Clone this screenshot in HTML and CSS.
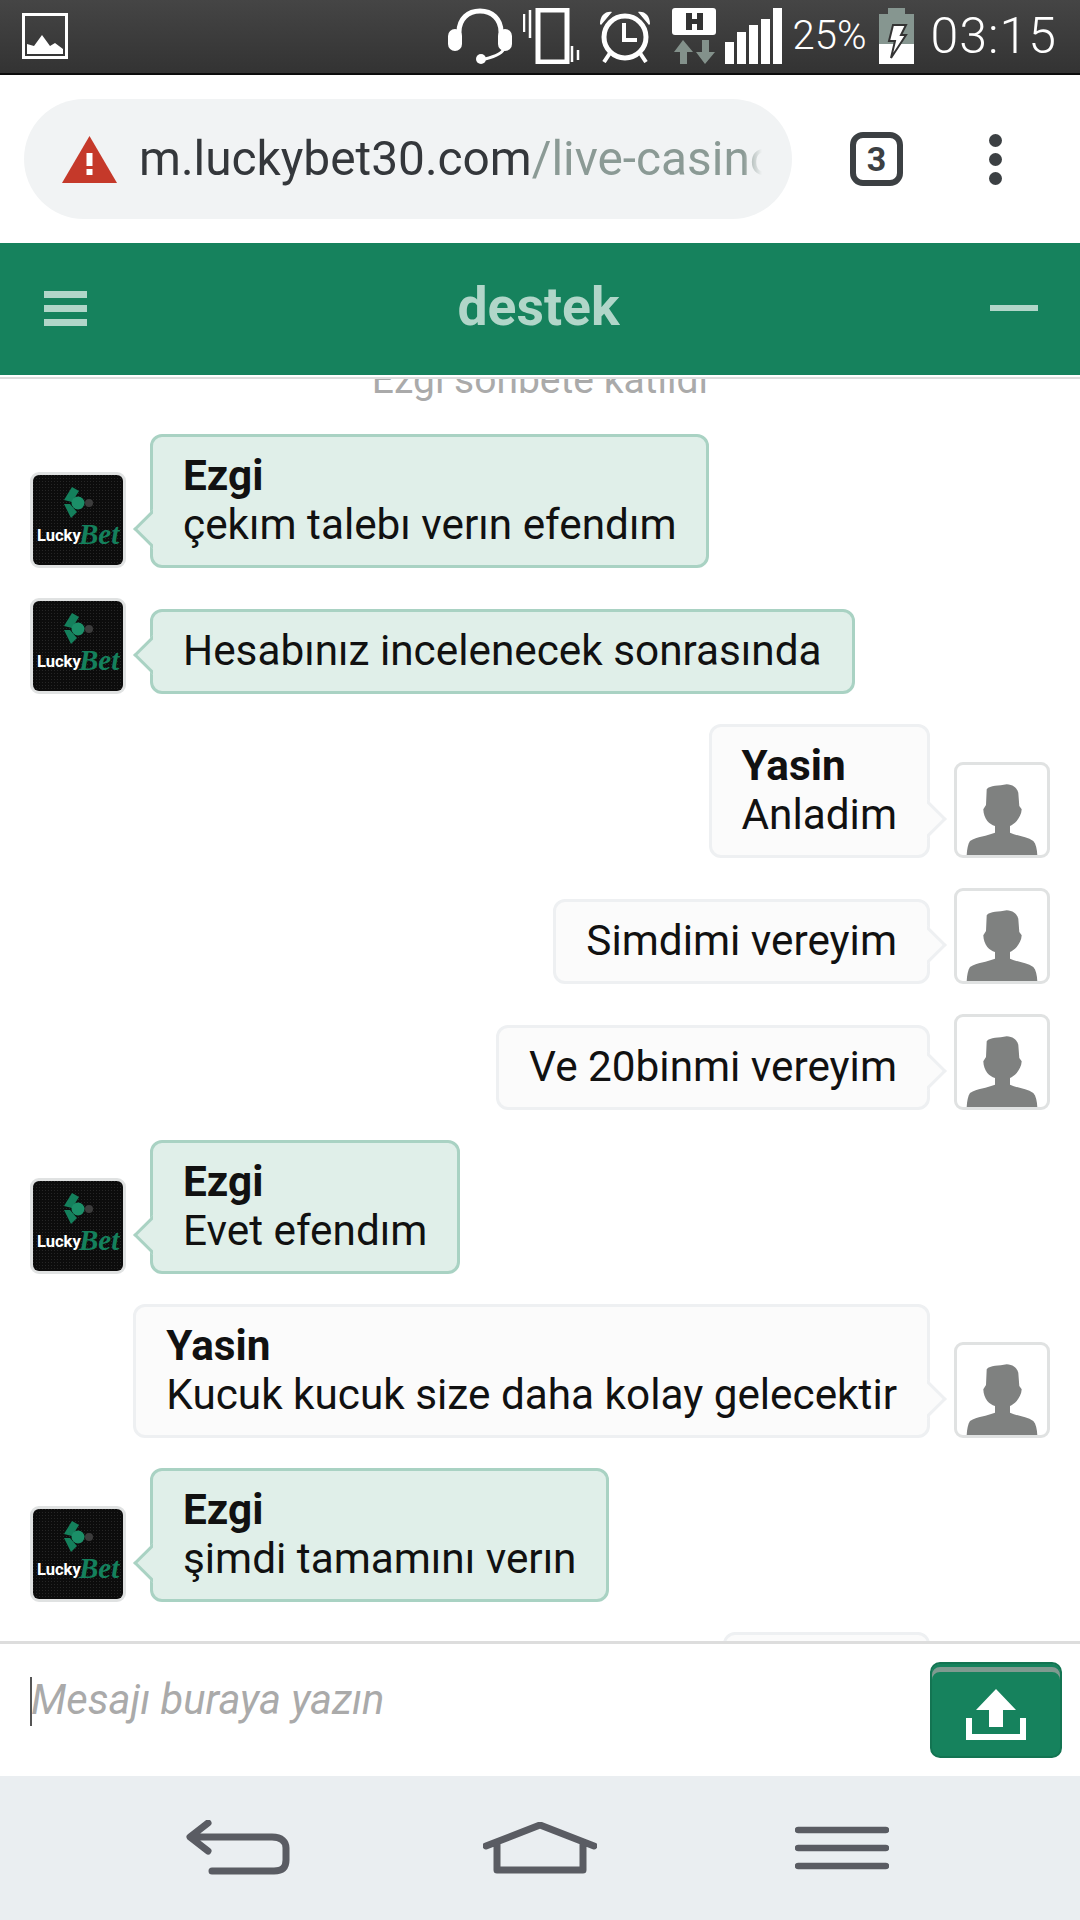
FILE: index.html
```html
<!DOCTYPE html>
<html lang="en">
<head>
    <meta charset="UTF-8">
    <meta name="viewport" content="width=device-width, initial-scale=1.0">
    <title>destek</title>
    <link rel="stylesheet" href="styles.css">
</head>
<body>
    <svg class="defs" width="0" height="0">
        <defs>
            <pattern id="dots" width="3" height="3" patternUnits="userSpaceOnUse">
                <rect width="3" height="3" fill="#0c0c0c"/>
                <rect width="1" height="1" fill="#262626"/>
            </pattern>
            <symbol id="logo" viewBox="0 0 90 90">
                <rect width="90" height="90" fill="url(#dots)"/>
                <polygon points="31,25 39,12 46,16 39,27" fill="#14805c"/>
                <circle cx="45" cy="28" r="6.5" fill="#1b8f68"/>
                <circle cx="56" cy="28" r="4" fill="#3c3c3c"/>
                <polygon points="31,29 37,29 44,37 38,43" fill="#14805c"/>
                <text x="4" y="66" class="logo-lucky">Lucky</text>
                <text x="46" y="69" class="logo-bet">Bet</text>
            </symbol>
            <symbol id="person" viewBox="0 0 90 90">
                <path d="M29.7 24.3C33 20 42 21 49.7 19.3C56 19.5 60 23 61.3 27.7L62.3 41L64.7 44.3C64.5 49 62 53 59.7 56C57.5 58.5 55 60 53 61L53 67.7C60 71 70 71.5 76.3 76C79 79 80 84 80.3 90L9.7 90C10 84 11 79 13 76C20 71.5 30 71 38 67.7L38 61C35 60 32.5 58.5 30.3 56C28 53 26.5 49 26.3 44.3L29 40Z" fill="#7f8180"/>
            </symbol>
        </defs>
    </svg>

    <div class="statusbar">
        <svg class="st-image" width="46" height="46" viewBox="0 0 46 46">
            <rect x="1.5" y="1.5" width="43" height="43" fill="none" stroke="#fff" stroke-width="3"/>
            <path d="M5 41V31L12 33L20 22L28 33L33 30L41 36V41Z" fill="#fff"/>
        </svg>
        <div class="st-right">
            <svg width="64" height="56" viewBox="0 0 64 56">
                <path d="M11 32V24C11 11 20 3 32 3S53 11 53 24V32" fill="none" stroke="#fff" stroke-width="5"/>
                <rect x="0" y="21" width="14" height="22" rx="7" fill="#fff"/>
                <rect x="50" y="21" width="14" height="22" rx="7" fill="#fff"/>
                <path d="M56 40C55 46 45 49 37 51" fill="none" stroke="#fff" stroke-width="3"/>
                <circle cx="33" cy="51" r="5" fill="#fff"/>
            </svg>
            <svg class="st-gap-11" width="60" height="56" viewBox="0 0 60 56">
                <rect x="15" y="2" width="29" height="52" fill="none" stroke="#fff" stroke-width="5"/>
                <path d="M1 6V24M7 2V30M49 38V54M55 42V52" stroke="#fff" stroke-width="2.5"/>
            </svg>
            <svg class="st-gap-14" width="56" height="54" viewBox="0 0 56 54">
                <circle cx="28" cy="28" r="21" fill="none" stroke="#fff" stroke-width="5"/>
                <path d="M27 14V31H40" fill="none" stroke="#fff" stroke-width="4"/>
                <path d="M3 15C3 7 8 2 15 3L4 16ZM53 15C53 7 48 2 41 3L52 16Z" fill="#fff"/>
                <path d="M13 44L7 53M43 44L49 53" stroke="#fff" stroke-width="4"/>
            </svg>
            <svg class="st-gap-19" width="44" height="56" viewBox="0 0 44 56">
                <rect width="44" height="27" rx="3" fill="#fff"/>
                <path d="M14 5H20V11H25V5H31V22H25V16H20V22H14Z" fill="#333"/>
                <path d="M11 32L21 44H15V56H8V44H2ZM33 56L43 44H37V32H30V44H24Z" fill="#83918b"/>
            </svg>
            <svg class="st-gap-9" width="57" height="56" viewBox="0 0 57 56">
                <path d="M0 34H9V56H0ZM12 24H21V56H12ZM24 17H33V56H24ZM36 11H45V56H36ZM48 0H57V56H48Z" fill="#fff"/>
            </svg>
            <span class="st-battery-text">25%</span>
            <svg class="st-gap-12" width="35" height="56" viewBox="0 0 35 56">
                <path d="M9 0H26V6H35V36H0V6H9Z" fill="#869690"/>
                <rect y="36" width="35" height="20" fill="#fff"/>
                <path d="M14 17H27L22 27H27L12 50L16 33H10Z" fill="#fff" stroke="#333" stroke-width="2"/>
            </svg>
            <span class="st-time">03:15</span>
        </div>
    </div>

    <div class="toolbar">
        <div class="omnibox">
            <svg width="55" height="47" viewBox="0 0 55 47">
                <polygon points="27.5,0 55,47 0,47" fill="#c5392a"/>
                <rect x="24.5" y="17" width="6" height="13" fill="#fff"/>
                <rect x="24.5" y="33" width="6" height="6" fill="#fff"/>
            </svg>
            <div class="url"><span class="url-host">m.luckybet30.com</span>/live-casino</div>
        </div>
        <div class="tab-count">3</div>
        <div class="kebab"><i></i><i></i><i></i></div>
    </div>

    <div class="chat-head">
        <div class="burger"><i></i><i></i><i></i></div>
        <div class="chat-title">destek</div>
        <div class="minimize"></div>
    </div>

    <div class="chat-list">
        <div class="sys-msg">Ezgi sohbete katıldı</div>

        <div class="row">
            <svg class="avatar"><use href="#logo"/></svg>
            <div class="bubble agent"><b>Ezgi</b>çekım talebı verın efendım</div>
        </div>
        <div class="row">
            <svg class="avatar"><use href="#logo"/></svg>
            <div class="bubble agent">Hesabınız incelenecek sonrasında</div>
        </div>
        <div class="row me">
            <div class="bubble user"><b>Yasin</b>Anladim</div>
            <svg class="avatar"><use href="#person"/></svg>
        </div>
        <div class="row me">
            <div class="bubble user">Simdimi vereyim</div>
            <svg class="avatar"><use href="#person"/></svg>
        </div>
        <div class="row me">
            <div class="bubble user">Ve 20binmi vereyim</div>
            <svg class="avatar"><use href="#person"/></svg>
        </div>
        <div class="row">
            <svg class="avatar"><use href="#logo"/></svg>
            <div class="bubble agent"><b>Ezgi</b>Evet efendım</div>
        </div>
        <div class="row me">
            <div class="bubble user"><b>Yasin</b>Kucuk kucuk size daha kolay gelecektir</div>
            <svg class="avatar"><use href="#person"/></svg>
        </div>
        <div class="row">
            <svg class="avatar"><use href="#logo"/></svg>
            <div class="bubble agent"><b>Ezgi</b>şimdi tamamını verın</div>
        </div>
        <div class="row me">
            <div class="bubble user bubble-cut"></div>
            <svg class="avatar"><use href="#person"/></svg>
        </div>
    </div>

    <div class="composer">
        <div class="msg-input"><span class="caret"></span><span class="placeholder">Mesajı buraya yazın</span></div>
        <div class="send-btn">
            <svg width="60" height="51" viewBox="0 0 60 51">
                <path d="M30 0L50 21H37V38H23V21H10Z" fill="#fff"/>
                <path d="M3 29V48H57V29" fill="none" stroke="#fff" stroke-width="6"/>
            </svg>
        </div>
    </div>

    <div class="navbar">
        <svg width="104" height="56" viewBox="0 0 104 56">
            <path d="M22 3L4 17L22 31M5 17H86C96 17 100 22 100 28V40C100 48 96 51 88 51H26" fill="none" stroke="#5a5c63" stroke-width="7" stroke-linecap="round" stroke-linejoin="round"/>
        </svg>
        <svg width="114" height="52" viewBox="0 0 114 52">
            <path d="M3 24L57 3L111 24M14 20V48H100V20" fill="none" stroke="#5a5c63" stroke-width="7" stroke-linecap="round" stroke-linejoin="round"/>
        </svg>
        <svg width="94" height="44" viewBox="0 0 94 44">
            <path d="M3 4H91M3 22H91M3 40H91" fill="none" stroke="#5a5c63" stroke-width="6.5" stroke-linecap="round"/>
        </svg>
    </div>
</body>
</html>
```

FILE: styles.css
```css
/* Global styles */
* {
    box-sizing: border-box;
}
body {
    font-family: Roboto, "Liberation Sans", sans-serif;
    margin: 0;
    width: 1080px;
    height: 1920px;
    display: flex;
    flex-direction: column;
    overflow: hidden;
    background-color: #fff;
    color: #111;
}
.defs {
    display: block;
    height: 0;
}

/* Phone status bar */
.statusbar {
    flex: none;
    height: 75px;
    padding: 0 23px 2px 22px;
    display: flex;
    align-items: center;
    justify-content: space-between;
    background: linear-gradient(#454545, #333);
    border-bottom: 2px solid #0c0c0c;
    color: #fff;
}
.st-right {
    display: flex;
    align-items: center;
}
.st-gap-9 {
    margin-left: 9px;
}
.st-gap-11 {
    margin-left: 11px;
}
.st-gap-12 {
    margin-left: 12px;
}
.st-gap-14 {
    margin-left: 14px;
}
.st-gap-19 {
    margin-left: 19px;
}
.st-battery-text {
    margin-left: 11px;
    font-size: 40px;
    font-weight: 300;
}
.st-time {
    margin-left: 17px;
    font-size: 50px;
    font-weight: 300;
    letter-spacing: 1px;
}

/* Browser toolbar */
.toolbar {
    flex: none;
    height: 168px;
    padding-left: 24px;
    display: flex;
    align-items: center;
}
.omnibox {
    width: 768px;
    height: 120px;
    padding-left: 38px;
    display: flex;
    align-items: center;
    gap: 22px;
    background-color: #f1f3f4;
    border-radius: 60px;
}
.url {
    width: 623px;
    overflow: hidden;
    white-space: nowrap;
    font-size: 47.8px;
    color: #8b9a95;
    -webkit-mask-image: linear-gradient(to right, #000 97%, transparent);
    mask-image: linear-gradient(to right, #000 97%, transparent);
}
.url-host {
    color: #34373b;
}
.tab-count {
    width: 53px;
    height: 54px;
    margin-left: 58px;
    display: flex;
    align-items: center;
    justify-content: center;
    border: 6px solid #3c4043;
    border-radius: 13px;
    font-size: 34px;
    font-weight: 700;
    color: #3c4043;
}
.kebab {
    margin-left: 86px;
    display: flex;
    flex-direction: column;
    gap: 6px;
}
.kebab i {
    width: 13px;
    height: 13px;
    border-radius: 50%;
    background-color: #3c4043;
}

/* Chat header */
.chat-head {
    flex: none;
    height: 136px;
    padding: 0 42px 4px 44px;
    display: flex;
    align-items: center;
    justify-content: space-between;
    background-color: #16825d;
    border-bottom: 2px solid #ddd;
    box-shadow: inset 0 -2px 0 #fff;
}
.burger {
    width: 43px;
    display: flex;
    flex-direction: column;
    gap: 7px;
}
.burger i {
    height: 7px;
    background-color: #b1d6c9;
}
.chat-title {
    margin-top: -3px;
    font-size: 53.5px;
    font-weight: 700;
    color: #b1d6c9;
}
.minimize {
    width: 48px;
    height: 6px;
    background-color: #b1d6c9;
}

/* Messages */
.chat-list {
    flex: 1;
    min-height: 0;
    padding: 0 30px;
    display: flex;
    flex-direction: column;
    gap: 30px;
    overflow: hidden;
}
.sys-msg {
    flex: none;
    margin-top: -23px;
    margin-bottom: -1px;
    font-size: 39px;
    line-height: 49px;
    text-align: center;
    color: #aaa;
}
.row {
    flex: none;
    display: flex;
    align-items: flex-end;
    gap: 24px;
}
.row.me {
    justify-content: flex-end;
}
.avatar {
    flex: none;
    width: 96px;
    height: 96px;
    border: 3px solid #e0e2e2;
    border-radius: 9px;
    background-color: #fff;
}
.bubble {
    position: relative;
    padding: 14px 30px 16px;
    border: 3px solid;
    border-radius: 12px;
    font-size: 42.3px;
    line-height: 49px;
}
.bubble b {
    display: block;
}
.bubble::after {
    content: "";
    position: absolute;
    bottom: 22px;
    width: 22px;
    height: 22px;
    border: 3px solid;
    transform: rotate(45deg);
}
.agent {
    background-color: #e0efe9;
    border-color: #a9d2c3;
}
.agent::after {
    left: -14px;
    background-color: #e0efe9;
    border-color: transparent transparent #a9d2c3 #a9d2c3;
}
.user {
    background-color: #fbfbfb;
    border-color: #eef0f2;
}
.user::after {
    right: -14px;
    background-color: #fbfbfb;
    border-color: #eef0f2 #eef0f2 transparent transparent;
}
.bubble-cut {
    width: 207px;
    height: 134px;
}

/* Logo text inside the agent avatar */
.logo-lucky {
    font-family: Roboto, sans-serif;
    font-size: 16.5px;
    font-weight: 700;
    fill: #fff;
}
.logo-bet {
    font-family: "Liberation Serif", serif;
    font-size: 29px;
    font-style: italic;
    font-weight: 700;
    fill: #14805c;
}

/* Message box */
.composer {
    flex: none;
    height: 135px;
    padding: 18px 18px 18px 30px;
    display: flex;
    align-items: flex-start;
    justify-content: space-between;
    background-color: #fff;
    border-top: 3px solid #ddd;
}
.msg-input {
    padding-top: 15px;
    display: flex;
    align-items: center;
}
.caret {
    width: 2px;
    height: 49px;
    background-color: #555;
}
.placeholder {
    margin-left: -1px;
    margin-top: -5px;
    font-size: 41.7px;
    font-style: italic;
    color: #aaa;
}
.send-btn {
    width: 132px;
    height: 96px;
    padding-top: 8px;
    display: flex;
    align-items: center;
    justify-content: center;
    background-color: #16825d;
    border: 2px solid #137452;
    border-radius: 10px;
    box-shadow: inset 0 3px 0 #16825d, inset 0 8px 0 #7f9a90;
}

/* Phone navigation bar */
.navbar {
    flex: none;
    height: 144px;
    padding: 0 87px;
    display: grid;
    grid-template-columns: repeat(3, 1fr);
    align-items: center;
    justify-items: center;
    background-color: #eaeef1;
}
```
